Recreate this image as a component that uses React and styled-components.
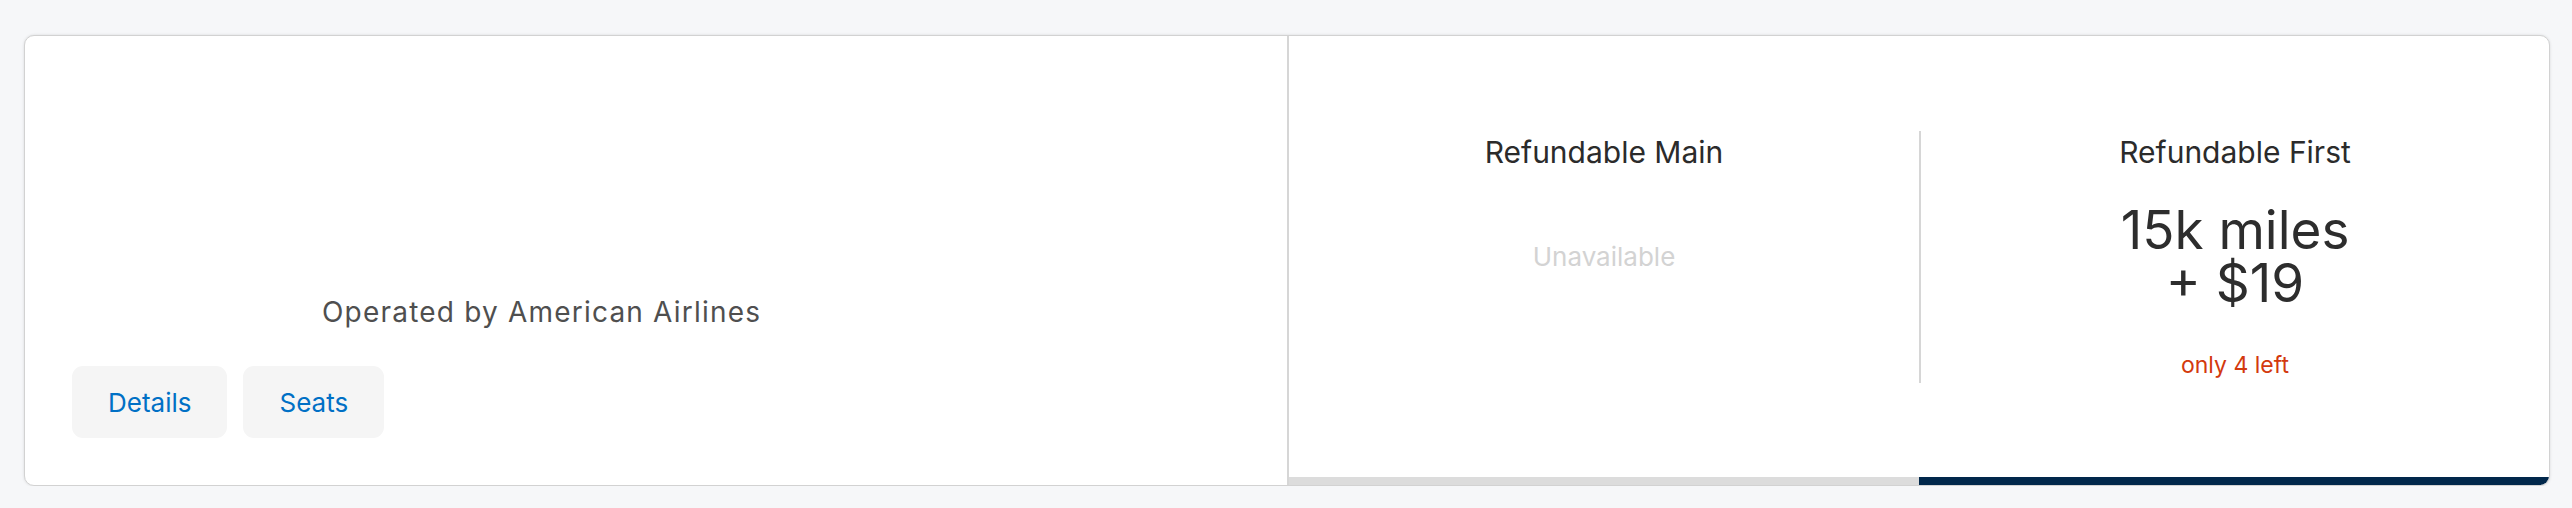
import React from 'react';
import styled, {createGlobalStyle} from 'styled-components';

const GlobalStyle = createGlobalStyle`
    html, body {
        margin: 0;
        padding: 0;
        background: #f6f7f9;
        font-family: Inter, "Liberation Sans", Arial, sans-serif;
    }
    * {
        box-sizing: border-box;
    }
`;

const Page = styled.div`
    padding: 35px 22px 0 24px;
`;

const StyledCard = styled.div`
    display: flex;
    height: 451px;
    background: #fff;
    border: 1px solid #d2d2d2;
    border-radius: 10px;
    box-shadow: 0 0 3px rgba(0, 0, 0, 0.12);
    overflow: hidden;
`;

const StyledSegment = styled.div`
    flex: 0 0 50%;
    min-width: 0;
    display: flex;
    flex-direction: column;
    justify-content: flex-end;
    padding: 0 47px 47px 47px;
`;

const OperatedBy = styled.p`
    margin: 0 0 37px 250px;
    font-size: 28px;
    line-height: 34px;
    color: #4f4f4f;
    letter-spacing: 1.2px;
`;

const ButtonRow = styled.div`
    display: flex;
    gap: 16px;
`;

const LinkButton = styled.button`
    height: 72px;
    padding: 0 36px;
    border: none;
    border-radius: 11px;
    background: #f5f5f5;
    color: #0070c5;
    font-family: inherit;
    font-size: 26px;
    cursor: pointer;
`;

const StyledFares = styled.div`
    flex: 1 1 0;
    min-width: 0;
    display: flex;
    border-left: 2px solid #d6d6d6;
`;

const StyledFare = styled.div`
    flex: 1 1 0;
    min-width: 0;
    display: flex;
    flex-direction: column;
    padding-top: 95px;
`;

const FareBody = styled.div`
    height: 252px;
    display: flex;
    flex-direction: column;
    align-items: center;
    padding-top: 3px;
    border-left: ${props => props.divided ? '2px solid #d6d6d6' : 'none'};
    text-align: center;
`;

const FareTitle = styled.div`
    font-size: 30px;
    line-height: 36px;
    color: #2b2b2b;
`;

const Unavailable = styled.div`
    margin-top: 71px;
    font-size: 26px;
    line-height: 32px;
    color: #d3d3d3;
`;

const PriceLine = styled.div`
    margin-top: ${props => props.first ? '34px' : '0'};
    font-size: 53px;
    line-height: 53px;
    color: #2d2d2d;
`;

const SeatsLeft = styled.div`
    margin-top: 41px;
    font-size: 23px;
    line-height: 28px;
    color: #d3390e;
`;

const FareBar = styled.div`
    margin-top: auto;
    height: 8px;
    background: ${props => props.available ? '#01284b' : '#dcdcdc'};
`;

const fares = [
    {title: 'Refundable Main', available: false},
    {title: 'Refundable First', available: true, miles: '15k miles', cash: '+ $19', left: 'only 4 left'}
];

function Fare({fare, divided}) {
    return (
        <StyledFare>
            <FareBody divided={divided}>
                <FareTitle>{fare.title}</FareTitle>
                {fare.available ? (
                    <>
                        <PriceLine first>{fare.miles}</PriceLine>
                        <PriceLine>{fare.cash}</PriceLine>
                        <SeatsLeft>{fare.left}</SeatsLeft>
                    </>
                ) : (
                    <Unavailable>Unavailable</Unavailable>
                )}
            </FareBody>
            <FareBar available={fare.available} />
        </StyledFare>
    );
}

export default function App() {
    return (
        <Page>
            <GlobalStyle />
            <StyledCard>
                <StyledSegment>
                    <OperatedBy>Operated by American Airlines</OperatedBy>
                    <ButtonRow>
                        <LinkButton>Details</LinkButton>
                        <LinkButton>Seats</LinkButton>
                    </ButtonRow>
                </StyledSegment>
                <StyledFares>
                    {fares.map((fare, i) => (
                        <Fare key={fare.title} fare={fare} divided={i > 0} />
                    ))}
                </StyledFares>
            </StyledCard>
        </Page>
    );
}
